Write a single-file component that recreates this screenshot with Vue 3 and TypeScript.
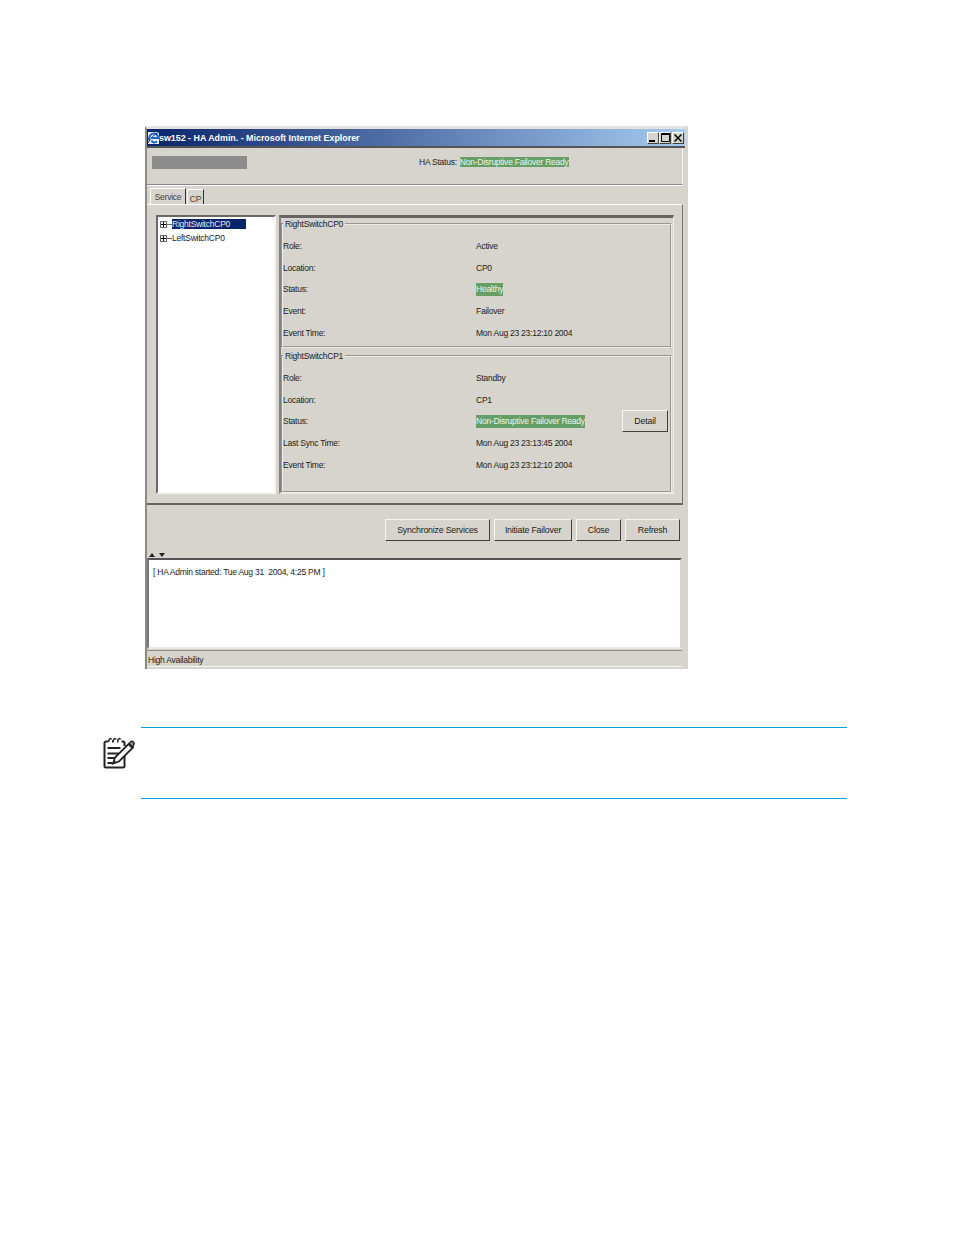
<script setup lang="ts">
interface Row {
  label: string
  value: string
  ok?: boolean
  detail?: boolean
}

const cp0: Row[] = [
  { label: 'Role:', value: 'Active' },
  { label: 'Location:', value: 'CP0' },
  { label: 'Status:', value: 'Healthy', ok: true },
  { label: 'Event:', value: 'Failover' },
  { label: 'Event Time:', value: 'Mon Aug 23 23:12:10 2004' }
]

const cp1: Row[] = [
  { label: 'Role:', value: 'Standby' },
  { label: 'Location:', value: 'CP1' },
  { label: 'Status:', value: 'Non-Disruptive Failover Ready', ok: true, detail: true },
  { label: 'Last Sync Time:', value: 'Mon Aug 23 23:13:45 2004' },
  { label: 'Event Time:', value: 'Mon Aug 23 23:12:10 2004' }
]

const groups = [
  { name: 'RightSwitchCP0', rows: cp0, cls: 'group-a' },
  { name: 'RightSwitchCP1', rows: cp1, cls: 'group-b' }
]

const actions = [
  { text: 'Synchronize Services', w: 105 },
  { text: 'Initiate Failover', w: 78 },
  { text: 'Close', w: 45 },
  { text: 'Refresh', w: 55 }
]
</script>

<template>
  <div class="page">
    <div class="window">
      <div class="titlebar">
        <svg class="ie" width="13" height="14" viewBox="0 0 13 14">
          <rect x="1" y="1" width="11" height="12" fill="#e8eef8" />
          <path d="M2 9.500C1.500 5 4 2.500 7 2.500c2.500 0 4 2 4 4.500H4.500M4.500 9.500c.5 2 3.500 2.500 5.500 1" fill="none" stroke="#1c64c8" stroke-width="2" />
          <path d="M1 12C3 7 8 3 12 1" fill="none" stroke="#123a86" stroke-width="1" />
        </svg>
        <span class="title">sw152 - HA Admin. - Microsoft Internet Explorer</span>
        <div class="controls">
          <button class="ctl"><svg width="8" height="8" viewBox="0 0 8 8"><rect x="0" y="6" width="6" height="2" fill="#000" /></svg></button>
          <button class="ctl"><svg width="9" height="9" viewBox="0 0 9 9"><path d="M.5 1.500h8v7h-8z" fill="none" stroke="#000" /><rect y="0" width="9" height="2" fill="#000" /></svg></button>
          <button class="ctl close"><svg width="8" height="8" viewBox="0 0 8 8"><path d="M.5.500l7 7M7.500.500l-7 7" stroke="#000" stroke-width="1.500" /></svg></button>
        </div>
      </div>

      <div class="header">
        <div class="redacted"></div>
        <div class="ha">
          <span>HA Status:</span>
          <span class="ok">Non-Disruptive Failover Ready</span>
        </div>
      </div>

      <div class="tabs">
        <div class="tab active">Service</div>
        <div class="tab">CP</div>
      </div>

      <div class="main">
        <div class="tree">
          <div class="node">
            <span class="plus"></span><span class="dash"></span><span class="sel">RightSwitchCP0</span>
          </div>
          <div class="node">
            <span class="plus"></span><span class="dash"></span><span>LeftSwitchCP0</span>
          </div>
        </div>

        <div class="detail">
          <fieldset v-for="g in groups" :key="g.name" class="group" :class="g.cls">
            <legend>{{ g.name }}</legend>
            <div v-for="r in g.rows" :key="r.label" class="row">
              <span class="label">{{ r.label }}</span>
              <span class="value" :class="{ ok: r.ok }">{{ r.value }}</span>
              <button v-if="r.detail" class="btn detail-btn">Detail</button>
            </div>
          </fieldset>
        </div>
      </div>

      <div class="actions">
        <button v-for="a in actions" :key="a.text" class="btn" :style="{ width: a.w + 'px' }">{{ a.text }}</button>
      </div>

      <div class="splitter">
        <svg width="18" height="4" viewBox="0 0 18 4">
          <path d="M0 4l3-4 3 4zM10 0h6l-3 4z" fill="#222" />
        </svg>
      </div>

      <div class="log">[ HA Admin started: Tue Aug 31&nbsp; 2004, 4:25 PM ]</div>

      <div class="status">High Availability</div>
    </div>

    <div class="note">
      <svg class="note-icon" width="32" height="32" viewBox="0 0 32 32">
        <path d="M21.500 17v12a1.500 1.500 0 0 1-1.500 1.500H3A1.500 1.500 0 0 1 1.500 29V6A1.500 1.500 0 0 1 3 4.500h2M9 4.500h1.500M14 4.500h1M18.500 4.500H20A1.500 1.500 0 0 1 21.500 6v3" fill="none" stroke="#222" stroke-width="2" />
        <path d="M6 5c-1-3 2-4.500 2.500-2.500M10.500 5c-1-3 2-4.500 2.500-2.500M15 5c-1-3 2-4.500 2.500-2.500" fill="none" stroke="#222" stroke-width="1.500" />
        <path d="M4.500 11h13M4.500 16.500h11M4.500 21h8M4.500 26h5" stroke="#222" stroke-width="2" />
        <path d="M10 26.500l2-6L25.500 7l4 4L16 24.500z" fill="#fff" stroke="#222" stroke-width="1.800" />
        <path d="M10 26.500l1-3.500 2.500 2.500z" fill="#222" />
        <path d="M26 6.500l1.500-1.500a1.800 1.800 0 0 1 3 3L30 10.500z" fill="#8a8a8a" stroke="#222" stroke-width="1.300" />
      </svg>
      <div class="note-box"></div>
    </div>
  </div>
</template>

<style>
html,
body {
  background: #fff;
}
</style>

<style scoped>
.page {
  width: 954px;
  height: 1235px;
  box-sizing: border-box;
  padding-top: 126px;
  font-family: "Liberation Sans", Arial, sans-serif;
  overflow: hidden;
}

.window {
  width: 543px;
  height: 543px;
  margin-left: 145px;
  box-sizing: border-box;
  display: flex;
  flex-direction: column;
  background: #d6d4cc;
  border-top: 3px solid #e4e2dc;
  border-left: 2px solid #8a8a86;
  border-right: 3px solid #d6d4cc;
  color: #222;
  font-size: 8.5px;
  letter-spacing: -0.24px;
}

.titlebar {
  height: 17px;
  flex: none;
  display: flex;
  align-items: center;
  background: linear-gradient(90deg, #0a246a, #a6caf0);
  border-bottom: 2px solid #555;
  box-sizing: content-box;
}

.ie {
  flex: none;
}

.title {
  margin-left: -1px;
  color: #fff;
  font-size: 8.9px;
  font-weight: 700;
  letter-spacing: 0;
  white-space: nowrap;
}

.controls {
  margin-left: auto;
  margin-right: 1px;
  display: flex;
}

.ctl {
  width: 12px;
  height: 12px;
  padding: 0;
  display: flex;
  align-items: center;
  justify-content: center;
  background: #d6d4cc;
  border: 1px solid;
  border-color: #fff #404040 #404040 #fff;
}

.close {
  margin-left: 1px;
}

.header {
  height: 37px;
  flex: none;
  box-sizing: border-box;
  display: flex;
  align-items: flex-start;
  margin-right: 2px;
  border-bottom: 1px solid #888;
  border-right: 1px solid #f0f0ec;
  box-shadow: 0 1px 0 #fff;
  padding: 8px 0 0 5px;
}

.redacted {
  width: 95px;
  height: 13px;
  background: #8c8c8c;
}

.ha {
  margin-left: 172px;
  display: flex;
  align-items: center;
  gap: 3px;
  height: 12px;
}

.ok {
  background: #659f66;
  color: #eef4ee;
}

.tabs {
  height: 19px;
  flex: none;
  display: flex;
  align-items: flex-end;
  padding-left: 3px;
}

.tab {
  width: 15px;
  height: 12px;
  padding: 2px 0 0;
  text-align: center;
  box-sizing: content-box;
  line-height: 14px;
  border: 1px solid;
  border-bottom: 0;
  border-color: #fff #333 transparent #fff;
  margin-left: 1px;
  color: #444;
}

.tab.active {
  width: 34px;
  height: 14px;
  margin-left: 0;
  padding-top: 1px;
  line-height: 14px;
}

.main {
  height: 301px;
  flex: none;
  box-sizing: border-box;
  display: flex;
  gap: 3px;
  margin-right: 2px;
  padding: 10px 7px 9px 9px;
  border-top: 1px solid #fff;
  border-right: 1px solid #77776f;
  border-bottom: 2px solid #666;
}

.tree {
  width: 120px;
  flex: none;
  box-sizing: border-box;
  background: #fff;
  border: 2px solid;
  border-color: #6a6a6a #f4f4f0 #f4f4f0 #6a6a6a;
  padding: 0 0 0 2px;
}

.node {
  height: 14px;
  display: flex;
  align-items: center;
  white-space: nowrap;
}

.plus {
  width: 7px;
  height: 7px;
  flex: none;
  box-sizing: border-box;
  border: 1px solid #666;
  background:
    linear-gradient(#000, #000) center / 5px 1px no-repeat,
    linear-gradient(#000, #000) center / 1px 5px no-repeat;
}

.dash {
  width: 5px;
  height: 1px;
  flex: none;
  background: #666;
}

.sel {
  display: inline-block;
  width: 74px;
  background: #0a246a;
  color: #e8e8ee;
}

.detail {
  width: 395px;
  flex: none;
  box-sizing: border-box;
  border-top: 3px solid #666;
  border-left: 2px solid #808080;
  border-right: 1px solid #ecebe6;
  border-bottom: 2px solid #ecebe6;
  padding: 0 1px 0 0;
}

.group {
  margin: 0;
  padding: 0;
  box-sizing: border-box;
  border: 2px groove #ecebe6;
  min-width: 0;
}

.group-a {
  height: 130px;
  margin-bottom: 2px;
}

.group-b {
  height: 143px;
}

.group legend {
  padding: 1px 2px 0;
  line-height: 11px;
  white-space: nowrap;
}

.row {
  height: 21.75px;
  display: flex;
  align-items: center;
  position: relative;
}

.group .row:first-of-type {
  margin-top: 5px;
}

.label {
  width: 193px;
  flex: none;
}

.value {
  white-space: nowrap;
}

.value.ok {
  line-height: 13px;
}

.btn {
  height: 22px;
  padding: 0;
  flex: none;
  background: #d6d4cc;
  border: 1px solid;
  border-color: #f6f6f2 #404040 #404040 #f6f6f2;
  color: #222;
  font-family: "Liberation Sans", Arial, sans-serif;
  font-size: 8.8px;
  letter-spacing: -0.2px;
}

.detail-btn {
  position: absolute;
  right: 2px;
  top: -1px;
  width: 46px;
}

.actions {
  height: 48px;
  flex: none;
  box-sizing: border-box;
  display: flex;
  justify-content: flex-end;
  gap: 4px;
  padding: 14px 5px 0 0;
}

.splitter {
  height: 5px;
  flex: none;
  padding-left: 2px;
  display: flex;
  align-items: flex-start;
}

.log {
  height: 91px;
  flex: none;
  box-sizing: border-box;
  margin-right: 3px;
  background: #fff;
  border: 2px solid;
  border-color: #555 #d6d4cc #e8e8e4 #777;
  padding: 7px 4px;
  white-space: nowrap;
}

.status {
  height: 17px;
  flex: none;
  margin: 1px 3px 0 0;
  padding: 1px 0 0 1px;
  line-height: 16px;
  border-top: 1px solid #8a8a86;
  border-bottom: 1px solid #f4f4f0;
  box-sizing: border-box;
}

.note {
  margin: 58px 107px 0 103px;
  display: flex;
}

.note-icon {
  flex: none;
  margin: 10px 6px 0 0;
}

.note-box {
  flex: 1;
  height: 72px;
  box-sizing: border-box;
  border-top: 1px solid #00a3d9;
  border-bottom: 1px solid #00a3d9;
}
</style>
